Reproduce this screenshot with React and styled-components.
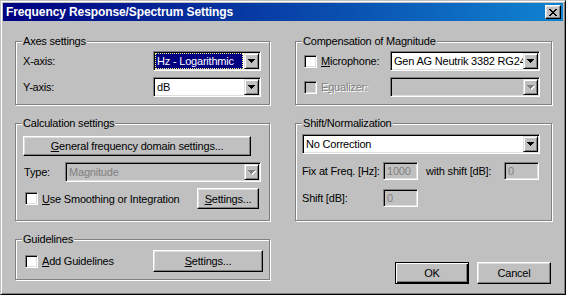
import React from 'react'
import styled, { createGlobalStyle } from 'styled-components'

const GlobalStyle = createGlobalStyle`
  html, body {
    margin: 0;
    padding: 0;
    background: #c0c0c0;
  }
  body {
    font-family: "Liberation Sans", Arial, sans-serif;
    font-size: 11px;
    letter-spacing: -0.2px;
    color: #000;
  }
  * {
    box-sizing: border-box;
  }
`

const Window = styled.div`
  width: 566px;
  height: 295px;
  background: #c0c0c0;
  border: 1px solid;
  border-color: #c0c0c0 #000 #000 #c0c0c0;
  box-shadow: inset 1px 1px #fff, inset -1px -1px #808080;
  padding: 2px;
  display: flex;
  flex-direction: column;
`

const TitleBar = styled.div`
  height: 18px;
  flex-shrink: 0;
  display: flex;
  align-items: center;
  justify-content: space-between;
  padding: 0 2px 0 3px;
  background: linear-gradient(to right, #000080, #1084d0);
`

const Title = styled.span`
  color: #fff;
  font-weight: bold;
  font-size: 12px;
  letter-spacing: -0.1px;
  line-height: 18px;
`

const CloseButton = styled.div`
  width: 16px;
  height: 14px;
  background: #c0c0c0;
  border: 1px solid;
  border-color: #fff #000 #000 #fff;
  box-shadow: inset -1px -1px #808080, inset 1px 1px #dfdfdf;
  display: flex;
  align-items: center;
  justify-content: center;
  padding-right: 1px;
`

const Body = styled.div`
  flex: 1;
  display: flex;
  gap: 25px;
  padding: 14px 0 8px 12px;
`

const Column = styled.div`
  width: ${p => p.$w}px;
  display: flex;
  flex-direction: column;
  gap: 12px;
`

const Group = styled.fieldset`
  margin: 0;
  padding: 0;
  min-width: 0;
  border: 1px solid #808080;
  box-shadow: inset 1px 1px #fff, 1px 1px #fff;
`

const Legend = styled.legend`
  margin-left: 6px;
  padding: 0 1px;
  line-height: 13px;
  background: #c0c0c0;
`

const GroupBody = styled.div`
  padding: ${p => p.$pad};
  display: flex;
  flex-direction: column;
  gap: ${p => p.$gap || 6}px;
`

const Row = styled.div`
  display: flex;
  align-items: center;
  height: ${p => p.$h || 20}px;
  justify-content: ${p => p.$justify || 'flex-start'};
  gap: ${p => p.$gap || 0}px;
`

const Label = styled.span`
  white-space: nowrap;
  width: ${p => (p.$w ? `${p.$w}px` : 'auto')};
  margin-left: ${p => p.$ml || 0}px;
  color: ${p => (p.$disabled ? '#808080' : '#000')};
  text-shadow: ${p => (p.$disabled ? '1px 1px #fff' : 'none')};
`

const ComboFrame = styled.div`
  width: ${p => (p.$w ? `${p.$w}px` : '100%')};
  margin-left: ${p => (p.$push ? 'auto' : '0')};
  height: 20px;
  flex-shrink: 0;
  display: flex;
  padding: 1px;
  background: ${p => (p.$disabled ? '#c0c0c0' : '#fff')};
  border: 1px solid;
  border-color: #808080 #fff #fff #808080;
  box-shadow: inset 1px 1px #000, inset -1px -1px #dfdfdf;
`

const ComboText = styled.div`
  flex: 1;
  min-width: 0;
  overflow: hidden;
  white-space: nowrap;
  line-height: 16px;
  padding-left: 2px;
  margin-right: ${p => (p.$selected ? 1 : 0)}px;
  color: ${p => (p.$selected ? '#fff' : p.$disabled ? '#808080' : '#000')};
  background: ${p => (p.$selected ? '#000080' : 'transparent')};
  outline: ${p => (p.$selected ? '1px dotted #ffff80' : 'none')};
  outline-offset: -1px;
`

const DropButton = styled.div`
  width: 15px;
  height: 16px;
  flex-shrink: 0;
  background: #c0c0c0;
  border: 1px solid;
  border-color: #dfdfdf #000 #000 #dfdfdf;
  box-shadow: inset 1px 1px #fff, inset -1px -1px #808080;
  display: flex;
  align-items: center;
  justify-content: center;
  padding-top: 1px;
`

const Field = styled.div`
  width: 35px;
  height: 18px;
  flex-shrink: 0;
  background: #c0c0c0;
  color: #808080;
  line-height: 14px;
  padding: 1px 3px;
  border: 1px solid;
  border-color: #808080 #fff #fff #808080;
  box-shadow: inset 1px 1px #000, inset -1px -1px #dfdfdf;
`

const Box = styled.div`
  width: 13px;
  height: 13px;
  flex-shrink: 0;
  margin-left: ${p => p.$ml || 0}px;
  margin-right: 4px;
  background: ${p => (p.$disabled ? '#c0c0c0' : '#fff')};
  border: 1px solid;
  border-color: #808080 #fff #fff #808080;
  box-shadow: inset 1px 1px #000, inset -1px -1px #dfdfdf;
`

const Button = styled.div`
  width: ${p => p.$w}px;
  height: ${p => p.$h || 22}px;
  flex-shrink: 0;
  margin-right: ${p => p.$mr || 0}px;
  background: #c0c0c0;
  display: flex;
  align-items: center;
  justify-content: center;
  white-space: nowrap;
  border: 1px solid;
  border-color: ${p => (p.$default ? '#000' : '#fff #000 #000 #fff')};
  box-shadow: ${p =>
    p.$default
      ? 'inset 1px 1px #fff, inset -1px -1px #000, inset -2px -2px #808080'
      : 'inset -1px -1px #808080, inset 1px 1px #dfdfdf'};
`

const Buttons = styled.div`
  margin-top: auto;
  display: flex;
  justify-content: flex-end;
  gap: 8px;
  padding-right: 1px;
`

const CloseGlyph = () => (
  <svg width="8" height="7" viewBox="0 0 8 7" shapeRendering="crispEdges">
    <path
      d="M0 0h2v1h-2zM6 0h2v1h-2zM1 1h2v1h-2zM5 1h2v1h-2zM2 2h4v1h-4zM3 3h2v1h-2zM2 4h4v1h-4zM1 5h2v1h-2zM5 5h2v1h-2zM0 6h2v1h-2zM6 6h2v1h-2z"
      fill="#000"
    />
  </svg>
)

const arrowPath = 'M0 0h7v1h-1v1h-1v1h-1v1h-1v-1h-1v-1h-1v-1h-1z'

const Arrow = ({ disabled }) => (
  <svg width="8" height="5" viewBox="0 0 8 5" shapeRendering="crispEdges">
    {disabled && <path d={arrowPath} fill="#fff" transform="translate(1 1)" />}
    <path d={arrowPath} fill={disabled ? '#808080' : '#000'} />
  </svg>
)

const ComboBox = ({ width, value, selected, disabled, push }) => (
  <ComboFrame $w={width} $disabled={disabled} $push={push}>
    <ComboText $selected={selected} $disabled={disabled}>
      {value}
    </ComboText>
    <DropButton>
      <Arrow disabled={disabled} />
    </DropButton>
  </ComboFrame>
)

export default function App() {
  return (
    <>
      <GlobalStyle />
      <Window>
        <TitleBar>
          <Title>Frequency Response/Spectrum Settings</Title>
          <CloseButton>
            <CloseGlyph />
          </CloseButton>
        </TitleBar>

        <Body>
          <Column $w={255}>
            <Group>
              <Legend>Axes settings</Legend>
              <GroupBody $pad="3px 8px 7px 7px">
                <Row $justify="space-between">
                  <Label>X-axis:</Label>
                  <ComboBox width={108} value="Hz - Logarithmic" selected />
                </Row>
                <Row $justify="space-between">
                  <Label>Y-axis:</Label>
                  <ComboBox width={108} value="dB" />
                </Row>
              </GroupBody>
            </Group>

            <Group>
              <Legend>Calculation settings</Legend>
              <GroupBody $pad="6px 8px 11px 7px">
                <Button $w={228} $h={20}>
                  <span>
                    <u>G</u>eneral frequency domain settings...
                  </span>
                </Button>
                <Row $justify="space-between">
                  <Label $ml={1}>Type:</Label>
                  <ComboBox width={196} value="Magnitude" disabled />
                </Row>
                <Row $h={21}>
                  <Box $ml={2} />
                  <Label>
                    <u>U</u>se Smoothing or Integration
                  </Label>
                  <Button $w={62} $h={21} $mr={2} style={{ marginLeft: 'auto' }}>
                    <span>
                      <u>S</u>ettings...
                    </span>
                  </Button>
                </Row>
              </GroupBody>
            </Group>

            <Group>
              <Legend>Guidelines</Legend>
              <GroupBody $pad="4px 6px 7px 7px">
                <Row $h={22} $justify="space-between">
                  <Row $h={22}>
                    <Box $ml={2} />
                    <Label>
                      <u>A</u>dd Guidelines
                    </Label>
                  </Row>
                  <Button $w={110} $h={22}>
                    <span>
                      <u>S</u>ettings...
                    </span>
                  </Button>
                </Row>
              </GroupBody>
            </Group>
          </Column>

          <Column $w={257}>
            <Group>
              <Legend>Compensation of Magnitude</Legend>
              <GroupBody $pad="3px 11px 7px 8px">
                <Row>
                  <Box />
                  <Label>
                    <u>M</u>icrophone:
                  </Label>
                  <ComboBox width={150} value="Gen AG Neutrik 3382 RG24-1" push />
                </Row>
                <Row>
                  <Box $disabled />
                  <Label $disabled>
                    E<u>q</u>ualizer:
                  </Label>
                  <ComboBox width={150} value="" disabled push />
                </Row>
              </GroupBody>
            </Group>

            <Group>
              <Legend>Shift/Normalization</Legend>
              <GroupBody $pad="4px 11px 13px 6px" $gap={8}>
                <ComboBox value="No Correction" />
                <Row $h={18}>
                  <Label $w={81}>Fix at Freq. [Hz]:</Label>
                  <Field>1000</Field>
                  <Label $w={78} $ml={8}>with shift [dB]:</Label>
                  <Field>0</Field>
                </Row>
                <Row $h={18} style={{ marginTop: 1 }}>
                  <Label $w={81}>Shift [dB]:</Label>
                  <Field>0</Field>
                </Row>
              </GroupBody>
            </Group>

            <Buttons>
              <Button $w={74} $h={22} $default>
                OK
              </Button>
              <Button $w={74} $h={22}>
                Cancel
              </Button>
            </Buttons>
          </Column>
        </Body>
      </Window>
    </>
  )
}
